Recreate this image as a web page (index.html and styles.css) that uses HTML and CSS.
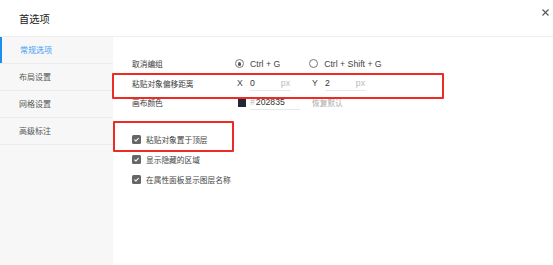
FILE: index.html
```html
<!DOCTYPE html>
<html lang="zh-CN">
<head>
<meta charset="utf-8">
<title>首选项</title>
<link rel="stylesheet" href="styles.css">
</head>
<body>
<div class="dialog">
  <div class="header">
    <div class="title">首选项</div>
    <button class="close" aria-label="关闭">
      <svg width="7" height="7" viewBox="0 0 7 7"><path d="M0.5 0.5 L6.5 6.5 M6.5 0.5 L0.5 6.5" stroke="#555" stroke-width="1.1" fill="none"/></svg>
    </button>
  </div>
  <div class="body">
    <ul class="sidebar">
      <li class="nav-item active">常规选项</li>
      <li class="nav-item">布局设置</li>
      <li class="nav-item">网格设置</li>
      <li class="nav-item">高级标注</li>
    </ul>
    <div class="content">
      <div class="form">
        <div class="label">取消编组</div>
        <div class="controls">
          <label class="radio"><span class="radio-dot checked"></span><span class="latin">Ctrl + G</span></label>
          <label class="radio second"><span class="radio-dot"></span><span class="latin">Ctrl + Shift + G</span></label>
        </div>

        <div class="label">粘贴对象偏移距离</div>
        <div class="controls">
          <span class="axis latin">X</span>
          <span class="input num"><span class="latin">0</span><span class="unit latin">px</span></span>
          <span class="axis axis-y latin">Y</span>
          <span class="input num"><span class="latin">2</span><span class="unit latin">px</span></span>
        </div>

        <div class="label">画布颜色</div>
        <div class="controls">
          <span class="swatch"></span>
          <span class="input color"><span class="hash latin">#</span><span class="latin">202835</span></span>
          <span class="reset">恢复默认</span>
        </div>
      </div>

      <ul class="checks">
        <li class="check"><span class="box"><svg width="9" height="9" viewBox="0 0 9 9"><path d="M2.4 4.6 L3.9 6 L6.6 3.1" stroke="#fff" stroke-width="1.1" fill="none"/></svg></span>粘贴对象置于顶层</li>
        <li class="check"><span class="box"><svg width="9" height="9" viewBox="0 0 9 9"><path d="M2.4 4.6 L3.9 6 L6.6 3.1" stroke="#fff" stroke-width="1.1" fill="none"/></svg></span>显示隐藏的区域</li>
        <li class="check"><span class="box"><svg width="9" height="9" viewBox="0 0 9 9"><path d="M2.4 4.6 L3.9 6 L6.6 3.1" stroke="#fff" stroke-width="1.1" fill="none"/></svg></span>在属性面板显示图层名称</li>
      </ul>
    </div>
  </div>
  <div class="mark mark-offset"></div>
  <div class="mark mark-top"></div>
</div>
</body>
</html>
```

FILE: styles.css
```css
* { box-sizing: border-box; }
html, body { margin: 0; padding: 0; background: #fff; }
body {
  font-family: "Liberation Sans", "Noto Sans CJK SC", sans-serif;
  color: #333;
}
.dialog {
  position: relative;
  width: 553px;
  height: 265px;
  background: #fff;
  display: flex;
  flex-direction: column;
}
.header {
  height: 37px;
  border-bottom: 1px solid #eeeeee;
  display: flex;
  justify-content: space-between;
  align-items: center;
  padding: 0 2px 0 19px;
  flex: none;
}
.title {
  font-family: "Noto Sans CJK SC", sans-serif;
  font-size: 10.3px;
  color: #222;
  line-height: 14px;
  margin-top: 1px;
}
.close {
  align-self: flex-start;
  margin-top: 8px;
  width: 12px;
  height: 9px;
  padding: 0;
  border: 0;
  background: none;
  display: flex;
  align-items: center;
  justify-content: center;
}
.body {
  flex: 1;
  display: flex;
}
.sidebar {
  list-style: none;
  margin: 0;
  padding: 0;
  width: 113px;
  background: #f7f7f7;
  flex: none;
}
.nav-item {
  height: 27px;
  line-height: 26px;
  border-bottom: 1px solid #ebebeb;
  padding-left: 19px;
  font-family: "Noto Sans CJK SC", sans-serif;
  font-size: 8px;
  color: #555;
}
.nav-item.active {
  color: #3d9df5;
  box-shadow: inset 2px 0 0 #1c8ef0;
  padding-left: 20px;
}
.content {
  flex: 1;
  padding: 17px 0 0 19px;
  font-size: 7.7px;
}
.form {
  display: grid;
  grid-template-columns: 103px auto;
  grid-auto-rows: 19.5px;
  align-items: center;
}
.label {
  font-family: "Noto Sans CJK SC", sans-serif;
  color: #3a3a3a;
}
.latin {
  font-family: "Liberation Sans", Arial, sans-serif;
  font-size: 8.7px;
}
.controls {
  display: flex;
  align-items: center;
  height: 100%;
}
.radio {
  display: flex;
  align-items: center;
  gap: 6px;
  color: #444;
}
.radio.second { margin-left: 29px; }
.radio-dot {
  width: 9px;
  height: 9px;
  border: 1px solid #777;
  border-radius: 50%;
  display: flex;
  align-items: center;
  justify-content: center;
}
.radio-dot.checked::after {
  content: "";
  width: 3.5px;
  height: 3.5px;
  border-radius: 50%;
  background: #555;
}
.axis {
  width: 15px;
  padding-left: 2px;
  color: #444;
}
.axis-y { margin-left: 21px; width: 13px; padding-left: 0; }
.input {
  height: 15px;
  border-bottom: 1px solid #e8e8e8;
  display: flex;
  align-items: center;
  justify-content: space-between;
  color: #333;
  padding-right: 1px;
}
.input.num { width: 41px; }
.unit { color: #bbb; }
.swatch {
  width: 8px;
  height: 8px;
  background: #202835;
  margin-left: 3px;
  margin-right: 4px;
}
.input.color {
  width: 50px;
  justify-content: flex-start;
}
.hash { color: #bbb; margin-right: 1px; }
.reset {
  margin-left: 12px;
  color: #aaa;
  font-family: "Noto Sans CJK SC", sans-serif;
}
.checks {
  list-style: none;
  margin: 17px 0 0;
  padding: 0;
}
.check {
  height: 20px;
  display: flex;
  align-items: center;
  gap: 5px;
  font-family: "Noto Sans CJK SC", sans-serif;
  color: #444;
}
.box {
  width: 9px;
  height: 9px;
  background: #666;
  border-radius: 1.5px;
  display: flex;
}
.mark {
  position: absolute;
  border: 2px solid #ee2a24;
  border-radius: 1px;
  pointer-events: none;
}
.mark-offset { left: 112px; top: 73px; width: 332px; height: 26px; }
.mark-top { left: 113px; top: 121px; width: 121px; height: 31px; }
```
